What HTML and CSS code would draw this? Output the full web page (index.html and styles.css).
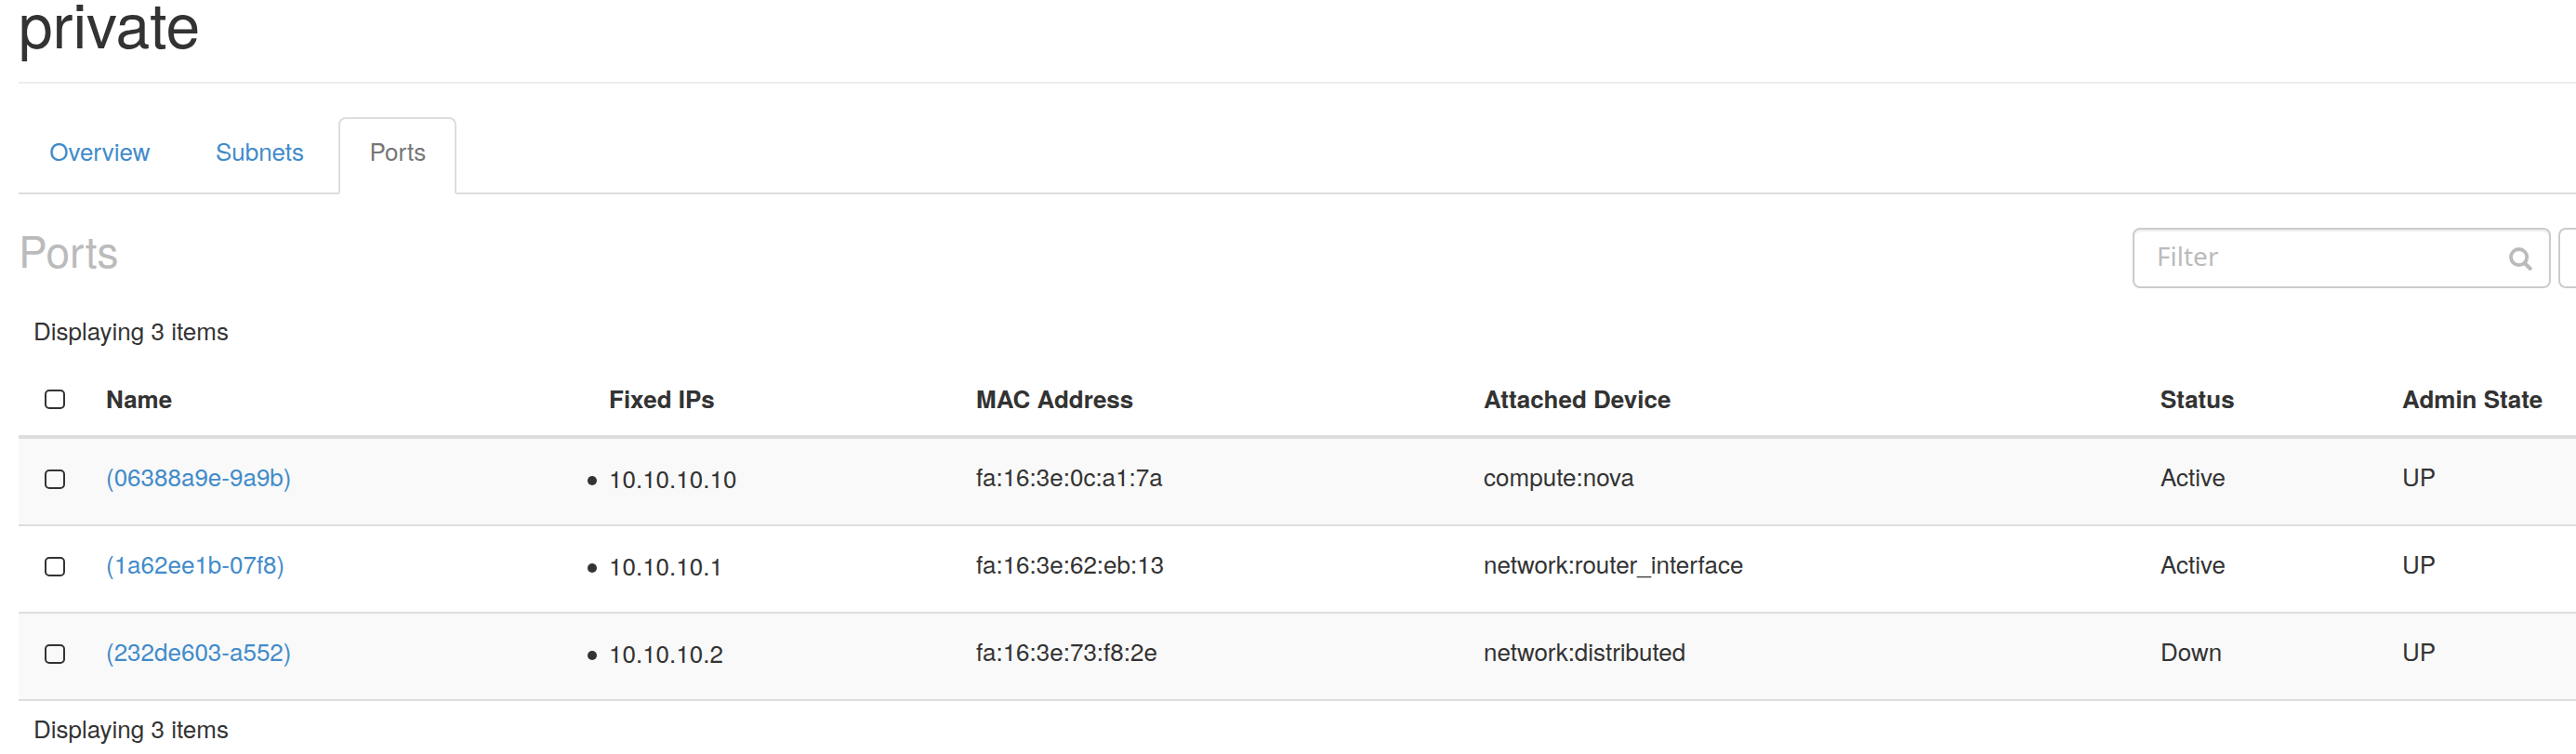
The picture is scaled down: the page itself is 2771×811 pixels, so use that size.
FILE: index.html
```html
<!DOCTYPE html>
<html lang="en">
<head>
<meta charset="utf-8">
<title>private</title>
<link rel="stylesheet" href="styles.css">
</head>
<body>
<main class="page">
  <h1 class="page-title">private</h1>
  <nav class="tabs">
    <a class="tab">Overview</a>
    <a class="tab">Subnets</a>
    <a class="tab tab-active">Ports</a>
  </nav>
  <div class="toolbar">
    <h2 class="section-title">Ports</h2>
    <div class="actions">
      <div class="filter">
        <span>Filter</span>
        <svg class="search" viewBox="0 0 25 25" width="25" height="25"><circle cx="10.6" cy="10.6" r="8.6" fill="none" stroke="#bbb" stroke-width="3.8"/><path d="M17 17.2 22.6 22.8" stroke="#bbb" stroke-width="4.2" stroke-linecap="round"/></svg>
      </div>
      <div class="button-edge"></div>
    </div>
  </div>
  <p class="count">Displaying 3 items</p>
  <table class="ports">
    <colgroup><col class="c-check"><col class="c-name"><col class="c-ips"><col class="c-mac"><col class="c-device"><col class="c-status"><col class="c-admin"></colgroup>
    <thead>
      <tr><th class="check"><span class="box"></span></th><th>Name</th><th>Fixed IPs</th><th>MAC Address</th><th>Attached Device</th><th>Status</th><th>Admin State</th></tr>
    </thead>
    <tbody>
      <tr><td class="check"><span class="box"></span></td><td><a class="link">(06388a9e-9a9b)</a></td><td class="ips"><span class="ip">10.10.10.10</span></td><td>fa:16:3e:0c:a1:7a</td><td>compute:nova</td><td>Active</td><td>UP</td></tr>
      <tr><td class="check"><span class="box"></span></td><td><a class="link">(1a62ee1b-07f8)</a></td><td class="ips"><span class="ip">10.10.10.1</span></td><td>fa:16:3e:62:eb:13</td><td>network:router_interface</td><td>Active</td><td>UP</td></tr>
      <tr><td class="check"><span class="box"></span></td><td><a class="link">(232de603-a552)</a></td><td class="ips"><span class="ip">10.10.10.2</span></td><td>fa:16:3e:73:f8:2e</td><td>network:distributed</td><td>Down</td><td>UP</td></tr>
    </tbody>
  </table>
  <p class="count count-bottom">Displaying 3 items</p>
</main>
</body>
</html>
```
FILE: styles.css
```css
* { box-sizing: border-box; }
body {
  margin: 0;
  overflow: hidden;
  background: #fff;
  color: #333;
  font: 26px/34px "Nimbus Sans", "TeX Gyre Heros", "Liberation Sans", Arial, sans-serif;
}
h1, h2, p { margin: 0; padding: 0; font-weight: normal; }
.page { height: 811px; padding-left: 20px; }
.page-title {
  height: 90px;
  font-size: 66px;
  line-height: 47px;
  letter-spacing: -.1px;
  border-bottom: 2px solid #eee;
}
.tabs {
  display: flex;
  gap: 4px;
  height: 83px;
  margin-top: 36px;
  border-bottom: 2px solid #ddd;
}
.tab {
  height: 83px;
  padding: 17px 31.2px 24px;
  border: 2px solid transparent;
  border-radius: 8px 8px 0 0;
  color: #428bca;
}
.tab-active { color: #777; background: #fff; border-color: #ddd; border-bottom-color: #fff; }
.toolbar {
  display: flex;
  justify-content: space-between;
  height: 65px;
  margin-top: 36px;
}
.section-title { padding-top: 2px; font-size: 46px; line-height: 42px; color: #bbb; }
.actions { display: flex; gap: 8px; }
.filter {
  display: flex;
  justify-content: space-between;
  width: 450px;
  padding: 9px 18px 0 24px;
  border: 2px solid #ccc;
  border-radius: 8px;
  box-shadow: inset 0 2px 2px rgba(0, 0, 0, .075);
  color: #bbb;
  font: 28px/38px "Noto Sans", sans-serif;
}
.search { margin-top: 10px; }
.button-edge { width: 19px; border: 2px solid #ccc; border-right: 0; border-radius: 8px 0 0 8px; }
.count { height: 38px; margin-top: 28px; padding-left: 16px; }
.count-bottom { margin-top: 12px; }
.ports { width: 2751px; table-layout: fixed; border-spacing: 0; }
.c-check { width: 78px; }
.c-name { width: 541px; }
.c-ips { width: 395px; }
.c-mac { width: 546px; }
.c-device { width: 728px; }
.c-status { width: 260px; }
.c-admin { width: 203px; }
th, td { padding: 0 0 0 16px; text-align: left; vertical-align: top; white-space: nowrap; }
th { height: 96px; padding-top: 36px; border-bottom: 4px solid #ddd; }
td { height: 94px; padding-top: 23px; border-bottom: 2px solid #ddd; }
tbody tr:nth-child(odd) { background: #f9f9f9; }
.ips { padding-top: 25px; }
.ip { display: flex; align-items: center; gap: 13px; margin-left: -23px; }
.ip::before { content: ""; width: 10px; height: 10px; margin-top: 6px; border-radius: 50%; background: #333; }
.check { padding-left: 28px; }
.box {
  display: block;
  width: 22px;
  height: 21px;
  margin-top: 7px;
  border: 2px solid #333;
  border-radius: 5px;
}
td .box { margin-top: 10px; }
.link { color: #428bca; }
```
